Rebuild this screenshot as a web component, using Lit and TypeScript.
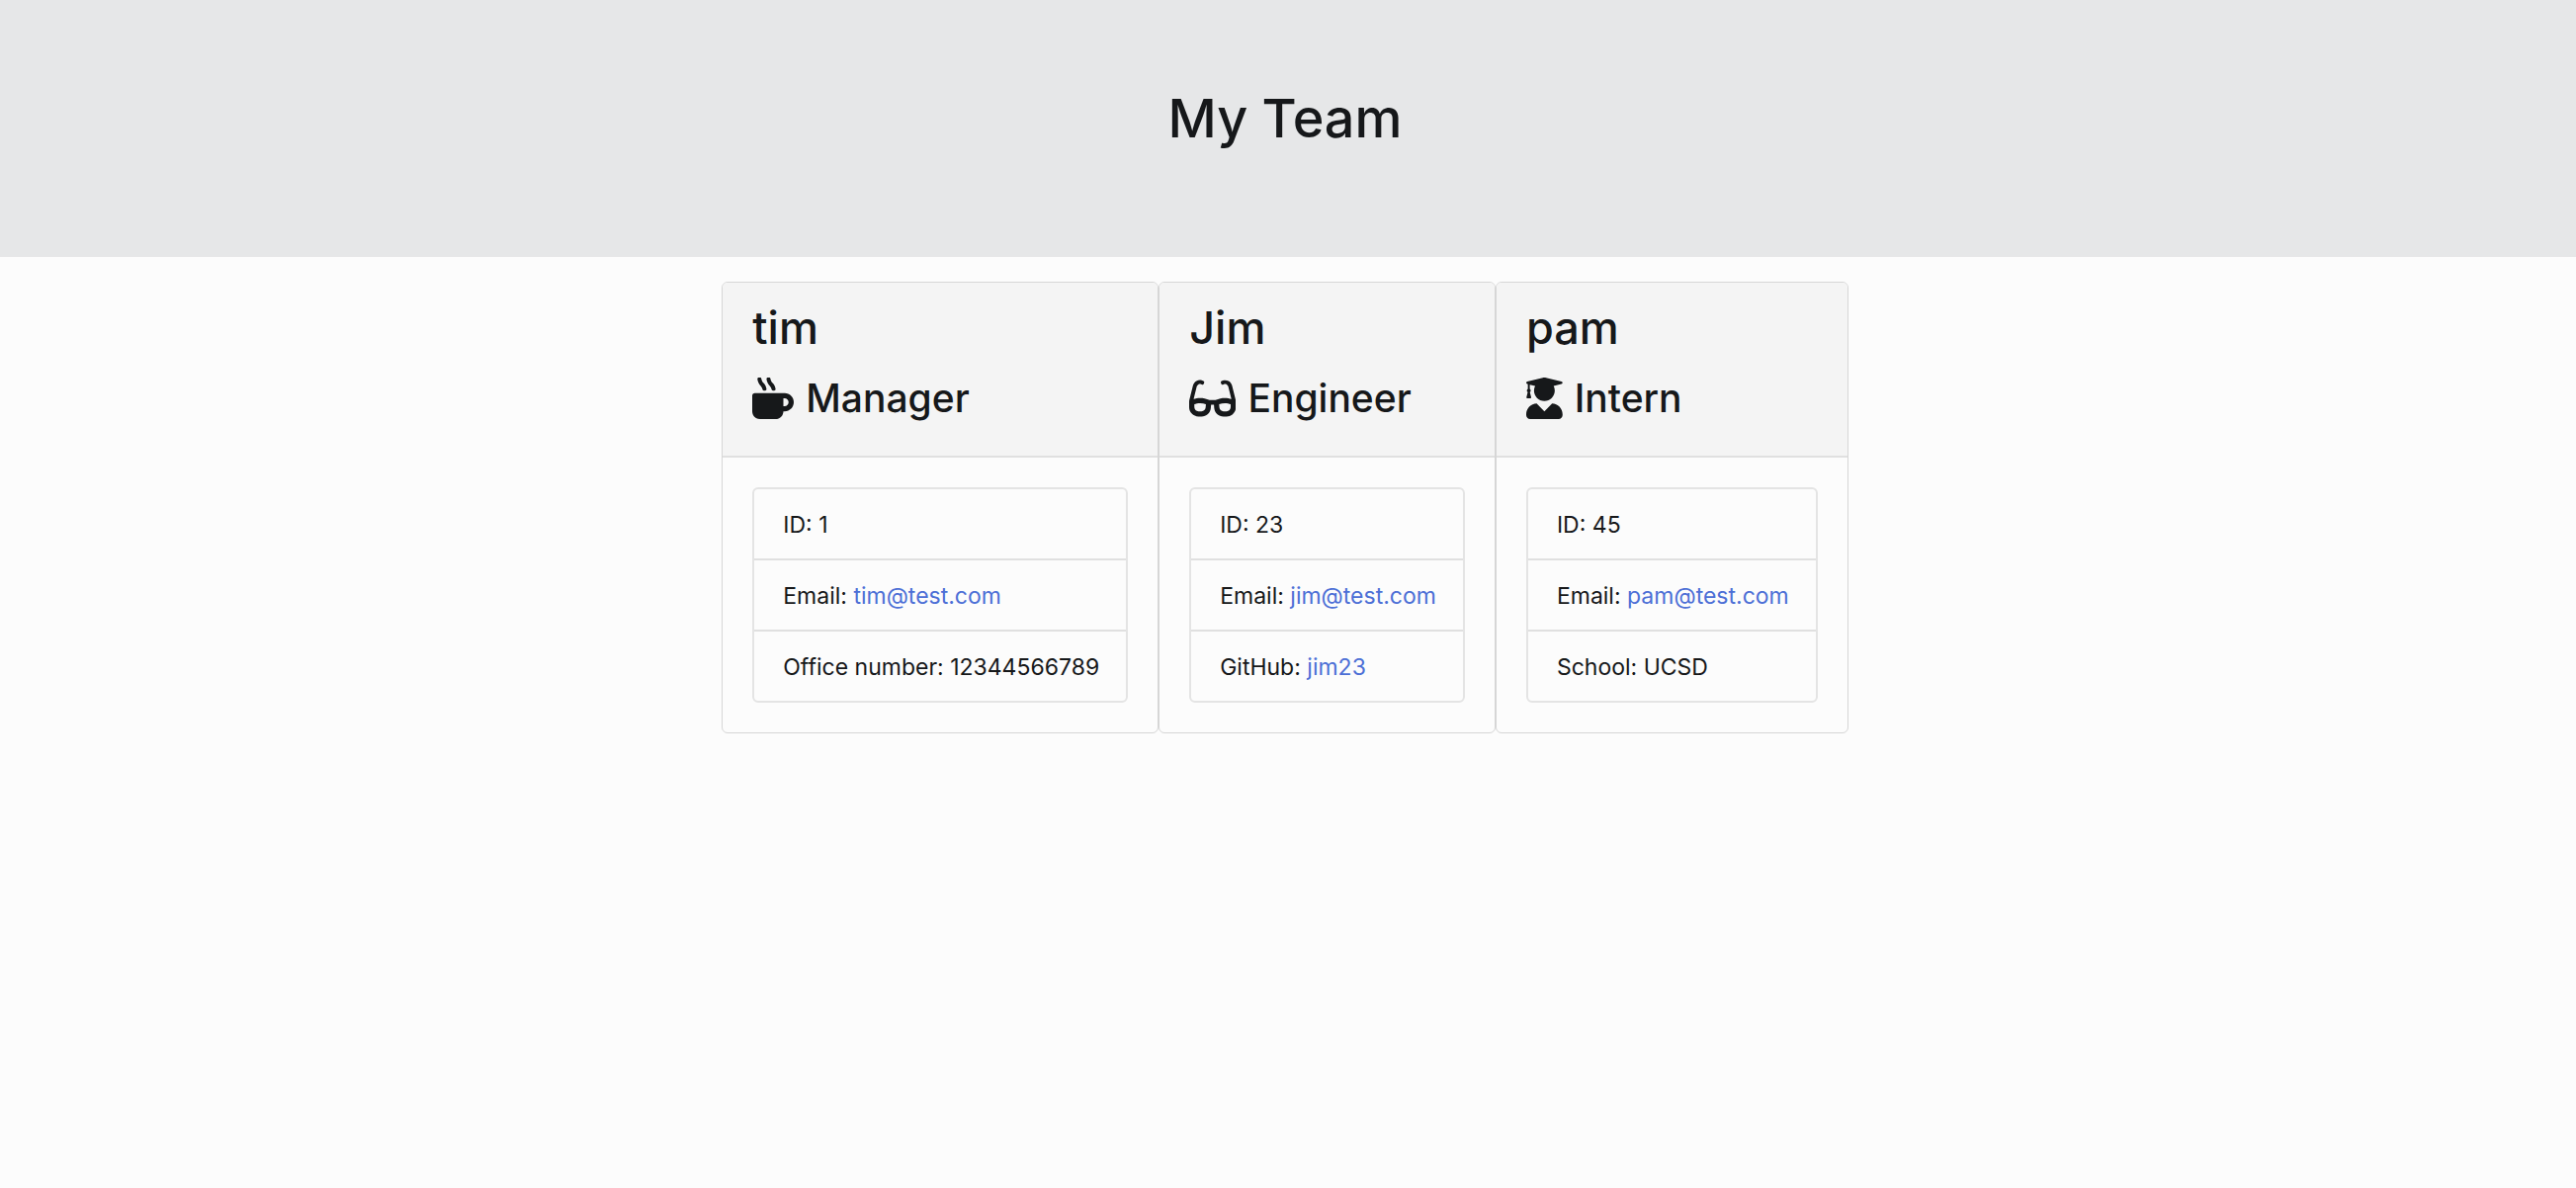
import { LitElement, html, css, svg } from "lit";
import { customElement, property } from "lit/decorators.js";

interface Fact {
  label: string;
  value: string;
  href?: string;
}

interface Member {
  name: string;
  role: string;
  icon: string;
  facts: Fact[];
}

const ICONS: Record<string, { box: string; path: string }> = {
  mug: {
    box: "0 0 512 512",
    path: "M127.1 146.5c1.3 7.7 8 13.5 16 13.5h16.5c9.8 0 17.6-8.5 16.3-18-3.8-28.2-16.4-54.2-36.6-74.7-14.4-14.7-23.6-33.3-26.4-53.5C111.8 5.9 105 0 96.8 0H80.4C70.6 0 63 8.5 64.1 18c3.9 31.9 18 61.3 40.6 84.4 12 12.2 19.7 27.5 22.4 44.1zm112 0c1.3 7.7 8 13.5 16 13.5h16.5c9.8 0 17.6-8.5 16.3-18-3.8-28.2-16.4-54.2-36.6-74.7-14.4-14.7-23.6-33.3-26.4-53.5C223.8 5.9 217 0 208.8 0h-16.4c-9.8 0-17.5 8.5-16.3 18 3.9 31.9 18 61.3 40.6 84.4 12 12.2 19.7 27.5 22.4 44.1zM400 192H32c-17.7 0-32 14.3-32 32v192c0 53 43 96 96 96h192c53 0 96-43 96-96h16c61.8 0 112-50.2 112-112s-50.2-112-112-112zm0 160h-16v-96h16c26.5 0 48 21.5 48 48s-21.5 48-48 48z",
  },
  glasses: {
    box: "0 0 576 512",
    path: "M574.1 280.37L528.75 98.66c-5.91-23.7-21.59-44.05-43-55.81-21.44-11.73-46.97-14.11-70.19-6.33l-15.25 5.08c-8.39 2.79-12.92 11.86-10.12 20.24l5.06 15.18c2.79 8.38 11.85 12.91 20.23 10.12l13.18-4.39c10.87-3.62 23-3.57 33.16 1.73 10.29 5.37 17.57 14.56 20.37 25.82l38.46 153.82c-22.19-6.81-49.79-12.46-81.2-12.46-34.77 0-73.98 7.02-114.85 26.74h-73.18c-40.87-19.74-80.08-26.75-114.86-26.75-31.42 0-59.02 5.65-81.21 12.46l38.46-153.83c2.79-11.25 10.09-20.45 20.38-25.81 10.16-5.3 22.28-5.35 33.15-1.73l13.17 4.39c8.38 2.79 17.44-1.74 20.23-10.12l5.06-15.18c2.8-8.38-1.73-17.45-10.12-20.24l-15.25-5.08c-23.22-7.78-48.75-5.41-70.19 6.33-21.41 11.77-37.09 32.11-43 55.8L1.9 280.37A64.218 64.218 0 0 0 0 295.86v70.25C0 429.01 51.58 480 115.2 480h37.12c60.28 0 110.37-45.94 114.88-105.37l2.93-38.63h35.75l2.93 38.63C313.31 434.06 363.4 480 423.68 480h37.12c63.62 0 115.2-50.99 115.2-113.88v-70.25c0-5.23-.64-10.43-1.9-15.5zm-370.72 89.42c-1.97 25.91-24.4 46.21-51.06 46.21H115.2C86.97 416 64 393.62 64 366.11v-37.54c18.12-6.49 43.42-12.92 72.58-12.92 23.86 0 47.26 4.33 69.93 12.92l-3.13 41.22zM512 366.12c0 27.51-22.97 49.88-51.2 49.88h-37.12c-26.67 0-49.1-20.3-51.06-46.21l-3.13-41.22c22.67-8.59 46.08-12.92 69.95-12.92 29.12 0 54.43 6.44 72.55 12.93v37.54z",
  },
  graduate: {
    box: "0 0 448 512",
    path: "M319.4 320.6L224 416l-95.4-95.4C57.1 323.7 0 382.2 0 454.4v9.6c0 26.5 21.5 48 48 48h352c26.5 0 48-21.5 48-48v-9.6c0-72.2-57.1-130.7-128.6-133.8zM13.6 79.8l6.4 1.5v58.4c-7 4.2-12 11.5-12 20.3 0 8.4 4.6 15.4 11.1 19.7L3.5 242c-1.7 6.9 2.1 14 7.6 14h41.8c5.5 0 9.3-7.1 7.6-14l-15.6-62.3C51.4 175.4 56 168.4 56 160c0-8.8-5-16.1-12-20.3V87.1l66 15.9c-8.6 17.2-14 36.4-14 57 0 70.7 57.3 128 128 128s128-57.3 128-128c0-20.6-5.3-39.8-14-57l96.3-23.2c18.2-4.4 18.2-27.1 0-31.5l-190.4-46c-13-3.1-26.7-3.1-39.7 0L13.6 48.2c-18.1 4.4-18.1 27.2 0 31.6z",
  },
};

const TEAM: Member[] = [
  {
    name: "tim",
    role: "Manager",
    icon: "mug",
    facts: [
      { label: "ID", value: "1" },
      { label: "Email", value: "tim@test.com", href: "mailto:tim@test.com" },
      { label: "Office number", value: "12344566789" },
    ],
  },
  {
    name: "Jim",
    role: "Engineer",
    icon: "glasses",
    facts: [
      { label: "ID", value: "23" },
      { label: "Email", value: "jim@test.com", href: "mailto:jim@test.com" },
      { label: "GitHub", value: "jim23", href: "https://github.com/jim23" },
    ],
  },
  {
    name: "pam",
    role: "Intern",
    icon: "graduate",
    facts: [
      { label: "ID", value: "45" },
      { label: "Email", value: "pam@test.com", href: "mailto:pam@test.com" },
      { label: "School", value: "UCSD" },
    ],
  },
];

@customElement("member-card")
export class MemberCard extends LitElement {
  @property({ attribute: false }) member!: Member;

  static styles = css`
    :host {
      display: block;
      box-sizing: border-box;
      border: 1px solid #d6d6d6;
      border-radius: 6px;
      overflow: hidden;
    }
    .head {
      padding: 16px 30px 32px;
      background: #f4f4f4;
      border-bottom: 2px solid #e0e0e0;
    }
    .name,
    .role {
      margin: 0;
      font-weight: 500;
    }
    .name {
      font-size: 45px;
      line-height: 60px;
      margin-bottom: 15px;
    }
    .role {
      display: flex;
      align-items: center;
      gap: 12px;
      font-size: 39px;
      line-height: 52px;
    }
    .icon {
      display: block;
      height: 42px;
      fill: currentColor;
    }
    .body {
      padding: 30px;
    }
    .facts {
      margin: 0;
      padding: 0;
      list-style: none;
      border: 2px solid #e4e4e4;
      border-radius: 6px;
    }
    .fact {
      padding: 18px 27px 16px 29px;
      font-size: 23px;
      line-height: 36px;
      white-space: nowrap;
    }
    .fact + .fact {
      border-top: 2px solid #e0e0e0;
    }
    .link {
      color: #4c6fd6;
      text-decoration: none;
    }
  `;

  render() {
    const { name, role, icon, facts } = this.member;
    const shape = ICONS[icon];
    return html`
      <header class="head">
        <h2 class="name">${name}</h2>
        <h3 class="role">
          <svg class="icon" viewBox=${shape.box} aria-hidden="true">
            ${svg`<path d=${shape.path}></path>`}
          </svg>
          <span>${role}</span>
        </h3>
      </header>
      <div class="body">
        <ul class="facts">
          ${facts.map(
            (f) => html`<li class="fact">
              ${f.label}:
              ${f.href
                ? html`<a class="link" href=${f.href}>${f.value}</a>`
                : f.value}
            </li>`
          )}
        </ul>
      </div>
    `;
  }
}

@customElement("app-root")
export class AppRoot extends LitElement {
  static styles = css`
    :host {
      display: block;
      min-height: 100vh;
      background: #fcfcfc;
      color: #16181a;
      font-family: Inter, "Liberation Sans", sans-serif;
    }
    .banner {
      padding: 84px 6px 104px 0;
      background: #e6e7e8;
      text-align: center;
    }
    .title {
      margin: 0;
      font-size: 54px;
      line-height: 72px;
      font-weight: 500;
    }
    .team {
      display: flex;
      flex-wrap: wrap;
      justify-content: center;
      padding: 25px 6px 24px 0;
    }
  `;

  render() {
    return html`
      <header class="banner"><h1 class="title">My Team</h1></header>
      <main class="team">
        ${TEAM.map((m) => html`<member-card .member=${m}></member-card>`)}
      </main>
    `;
  }
}
